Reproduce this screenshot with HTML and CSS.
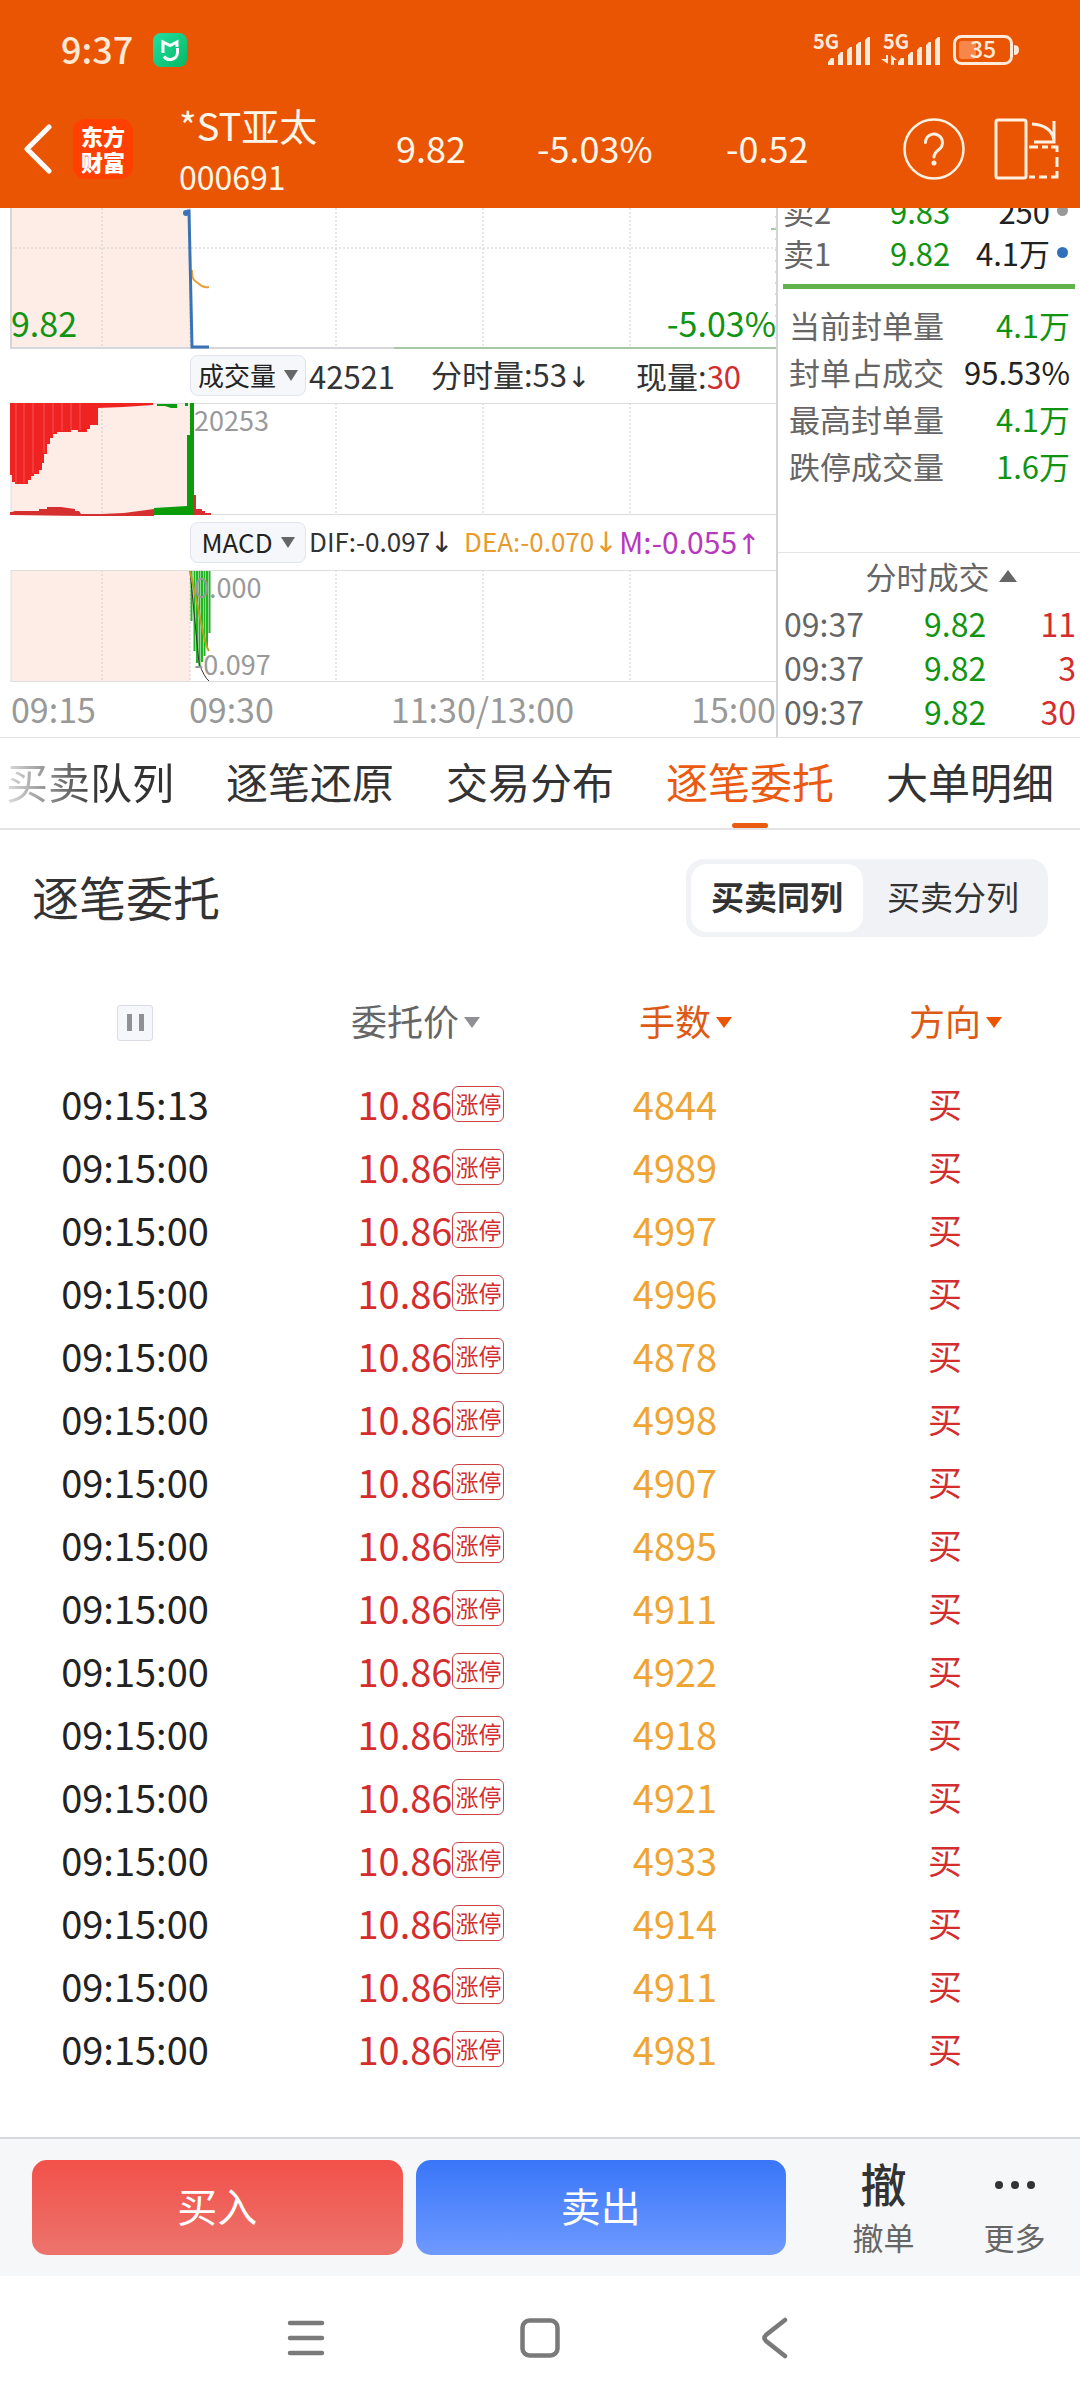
FILE: index.html
```html
<!DOCTYPE html>
<html lang="zh-CN">
<head>
<meta charset="utf-8">
<meta name="viewport" content="width=device-width">
<title>*ST亚太 000691</title>
<link rel="stylesheet" href="styles.css">
</head>
<body>
<header class="top">
  <div class="status">
    <span class="clock">9:37</span>
    <svg class="mi" viewBox="0 0 34 34"><defs><linearGradient id="mg" x1="0" y1="0" x2="1" y2="1"><stop offset="0" stop-color="#1fe0a2"/><stop offset="1" stop-color="#08b763"/></linearGradient></defs><rect width="34" height="34" rx="8" fill="url(#mg)"/><path d="M10 20V9l7 3.500 7-3.500v5" fill="none" stroke="#fff" stroke-width="3"/><path d="M24.500 15v4.500a7.500 7.500 0 0 1-13.500 4" fill="none" stroke="#fff" stroke-width="3"/></svg>
    <span class="status-right">
      <svg class="signal" viewBox="0 0 58 32"><text x="0" y="15" class="g5">5G</text><g fill="#ffeada"><path d="M15 31v-3l3-4h3v7zM25 31V21l3-3h2v13zM34 31V16l3-3h2v18zM43 31V11l3-3h2v23zM52 31V6l3-3h2v28z"/></g></svg>
      <svg class="signal second" viewBox="0 0 58 32"><text x="1" y="15" class="g5">5G</text><g fill="#ffeada"><path d="M4 21h2v9l-7-5h5zM9 31V21l6 5h-3v5zM16 31v-3l3-4h3v7zM26 31V21l3-3h2v13zM35 31V16l3-3h2v18zM44 31V11l3-3h2v23zM53 31V6l3-3h2v28z"/></g></svg>
      <svg class="battery" viewBox="0 0 66 30"><rect x="1.500" y="1.500" width="57" height="27" rx="7" fill="none" stroke="#ffeada" stroke-width="3"/><rect x="6" y="6" width="17" height="18" rx="3" fill="#f6864a"/><path d="M61 10q5 0 5 5t-5 5z" fill="#ffeada"/><text x="30" y="23" text-anchor="middle" class="pct">35</text></svg>
    </span>
  </div>
  <div class="quote">
    <button class="icon-btn back" aria-label="返回"><svg width="30" height="50" viewBox="0 0 30 50"><path d="M26 3L4 25l22 22" fill="none" stroke="#fff" stroke-width="5" stroke-linecap="round" stroke-linejoin="round"/></svg></button>
    <div class="logo"><span>东方</span><span>财富</span></div>
    <h1 class="name">*ST亚太<span class="code">000691</span></h1>
    <span class="q">9.82</span>
    <span class="q">-5.03%</span>
    <span class="q">-0.52</span>
    <button class="icon-btn help" aria-label="帮助"><svg width="62" height="62" viewBox="0 0 62 62" fill="none" stroke="#fff1e2"><circle cx="31" cy="31" r="29.500" stroke-width="2.500"/><path d="M22.500 24.500a8.500 8.500 0 1 1 13.500 7c-3.500 2.500-5 4-5 7.500" stroke-width="3" stroke-linecap="round"/><circle cx="31" cy="45" r="1.500" stroke-width="2" fill="#fff1e2"/></svg></button>
    <button class="icon-btn rotate" aria-label="横屏"><svg width="66" height="62" viewBox="0 0 66 62" fill="none" stroke="#fff1e2" stroke-width="3"><rect x="2" y="2" width="30" height="58" rx="2"/><path d="M38 6q19 1 22 16M60 3v21H40"/><path d="M35 29h9M48 29h6M57 29h6v5M63 39v10M63 53v6h-6M53 59h-8M41 59h-6"/></svg></button>
  </div>
</header>

<main>
<section class="market">
  <div class="charts">
    <div class="panel price-panel">
      <svg viewBox="0 0 776 141" preserveAspectRatio="none">
        <rect x="11" width="179" height="139" fill="#fdede6"/>
        <g class="grid"><path d="M102 0v140M190 0v140M336 0v140M483 0v140M630 0v140M11 40h765"/></g>
        <path d="M11 0v140H776" fill="none" stroke="#d5d7da" stroke-width="2"/>
        <path d="M394 140H776" stroke="#a6c8a6" stroke-width="2"/><path d="M771 21h5" stroke="#9ecf9e" stroke-width="2"/><path d="M775.500 8v130" stroke="#cde3cd" stroke-dasharray="2 9"/>
        <path d="M192 62q0 8 2 10l5 4q4 4 10 3" fill="none" stroke="#e9a23b" stroke-width="2"/>
        <circle cx="186" cy="5" r="3" fill="#3a73b5"/><path d="M187 3h2l3 136h17" fill="none" stroke="#3a73b5" stroke-width="3"/>
      </svg>
      <span class="tag tag-low">9.82</span><span class="tag tag-pct">-5.03%</span>
    </div>
    <div class="indicator">
      <button class="picker">成交量<i class="tri"></i></button>
      <span class="vol">42521</span><span class="ticks">分时量:53<b class="arr">↓</b></span><span>现量:<em>30</em></span>
    </div>
    <div class="panel">
      <svg viewBox="0 0 776 113" preserveAspectRatio="none">
        <rect x="11" width="179" height="112" fill="#fdede6"/>
        <g class="grid"><path d="M102 0v112M190 0v112M336 0v112M483 0v112M630 0v112"/></g>
        <path d="M11 0.500H776M11 0v112M11 111.500H776" fill="none" stroke="#dcdee0"/>
        <path d="M10 0V72h2v7h3v2h13v-4h3v-4h3v-2h5v-4h3v-7h2v-9h3v-10h3v-6h3v-4h4v-2h14v-2h7v2h9v-3h3v-4h8V5l25-1 30-2V0z" fill="#f02323"/>
        <path d="M16 0v80M24 0v80M33 0v70M44 0v50M53 0v30M62 0v28M71 0v27M80 0v27" stroke="#f75555" fill="none"/>
        <path d="M10 112v-3h2l3-1h24v-2h8v-2h14l14 2v2h4l2 3h20l23-1 30-4v8z" fill="#d62f2f"/>
        <path d="M154 112v-7l33-2V32h3V0h4v112zM157 1h20v4h-6l-6-2h-8zM185 0h3v3h-3z" fill="#0a9c0a"/>
        <path d="M194 112V92h2v14h6v2h3v2h6v2z" fill="#d62f2f"/>
      </svg>
      <span class="tag small tag-top">20253</span>
    </div>
    <div class="indicator">
      <button class="picker">MACD<i class="tri"></i></button>
      <span class="dif">DIF:-0.097<b class="arr">↓</b></span><span class="dea">DEA:-0.070<b class="arr">↓</b></span><span class="m">M:-0.055<b class="arr">↑</b></span>
    </div>
    <div class="panel">
      <svg viewBox="0 0 776 113" preserveAspectRatio="none">
        <rect x="11" width="179" height="112" fill="#fdede6"/>
        <g class="grid"><path d="M102 0v112M190 0v112M336 0v112M483 0v112M630 0v112"/></g>
        <path d="M11 0.500H776M11 0v112M11 111.500H776" fill="none" stroke="#dcdee0"/>
        <path d="M191.500 1v50M194.500 1v80M197 1v92M199.500 1v96M202 1v91M204.500 1v85M207 1v75M209.500 1v62" stroke="#22b422" stroke-width="2" fill="none"/>
        <path d="M190 1l9 92q5 14 10 18" fill="none" stroke="#333"/><path d="M190 1q8 36 12 56t7 24" fill="none" stroke="#b8a21c" stroke-width="2"/>
      </svg>
      <span class="tag small tag-top">0.000</span><span class="tag small tag-bot">-0.097</span>
    </div>
    <div class="times"><span>09:15</span><span>09:30</span><span>11:30/13:00</span><span>15:00</span></div>
  </div>
  <aside class="side">
    <div class="book">
      <div><span>卖2</span><span class="green">9.83</span><span class="qty">250</span><i class="dot gray"></i></div>
      <div><span>卖1</span><span class="green">9.82</span><span class="qty">4.1万</span><i class="dot"></i></div>
    </div>
    <dl class="stats">
      <div><dt>当前封单量</dt><dd>4.1万</dd></div>
      <div><dt>封单占成交</dt><dd class="dark">95.53%</dd></div>
      <div><dt>最高封单量</dt><dd>4.1万</dd></div>
      <div><dt>跌停成交量</dt><dd>1.6万</dd></div>
    </dl>
    <button class="deal-head">分时成交<i class="tri up"></i></button>
    <div class="deals">
      <div><span>09:37</span><span class="green">9.82</span><span class="red">11</span></div>
      <div><span>09:37</span><span class="green">9.82</span><span class="red">3</span></div>
      <div><span>09:37</span><span class="green">9.82</span><span class="red">30</span></div>
    </div>
  </aside>
</section>

<nav class="tabs">
  <a href="#" class="fade">买卖队列</a><a href="#">逐笔还原</a><a href="#">交易分布</a><a href="#" class="on">逐笔委托</a><a href="#">大单明细</a>
</nav>

<section class="orders">
  <div class="orders-head">
    <h2>逐笔委托</h2>
    <div class="segment"><button class="on">买卖同列</button><button>买卖分列</button></div>
  </div>
  <table>
    <thead><tr>
      <th><button class="pause" aria-label="暂停"><svg width="17" height="17" viewBox="0 0 17 17"><path d="M0 0h5v17H0zM12 0h5v17h-5z" fill="#909096"/></svg></button></th>
      <th><button class="sort"><span>委托价</span><i class="tri"></i></button></th>
      <th><button class="sort active"><span>手数</span><i class="tri"></i></button></th>
      <th><button class="sort active"><span>方向</span><i class="tri"></i></button></th>
    </tr></thead>
    <tbody>
      <tr><td>09:15:13</td><td><div class="price"><span>10.86</span><small>涨停</small></div></td><td>4844</td><td>买</td></tr>
      <tr><td>09:15:00</td><td><div class="price"><span>10.86</span><small>涨停</small></div></td><td>4989</td><td>买</td></tr>
      <tr><td>09:15:00</td><td><div class="price"><span>10.86</span><small>涨停</small></div></td><td>4997</td><td>买</td></tr>
      <tr><td>09:15:00</td><td><div class="price"><span>10.86</span><small>涨停</small></div></td><td>4996</td><td>买</td></tr>
      <tr><td>09:15:00</td><td><div class="price"><span>10.86</span><small>涨停</small></div></td><td>4878</td><td>买</td></tr>
      <tr><td>09:15:00</td><td><div class="price"><span>10.86</span><small>涨停</small></div></td><td>4998</td><td>买</td></tr>
      <tr><td>09:15:00</td><td><div class="price"><span>10.86</span><small>涨停</small></div></td><td>4907</td><td>买</td></tr>
      <tr><td>09:15:00</td><td><div class="price"><span>10.86</span><small>涨停</small></div></td><td>4895</td><td>买</td></tr>
      <tr><td>09:15:00</td><td><div class="price"><span>10.86</span><small>涨停</small></div></td><td>4911</td><td>买</td></tr>
      <tr><td>09:15:00</td><td><div class="price"><span>10.86</span><small>涨停</small></div></td><td>4922</td><td>买</td></tr>
      <tr><td>09:15:00</td><td><div class="price"><span>10.86</span><small>涨停</small></div></td><td>4918</td><td>买</td></tr>
      <tr><td>09:15:00</td><td><div class="price"><span>10.86</span><small>涨停</small></div></td><td>4921</td><td>买</td></tr>
      <tr><td>09:15:00</td><td><div class="price"><span>10.86</span><small>涨停</small></div></td><td>4933</td><td>买</td></tr>
      <tr><td>09:15:00</td><td><div class="price"><span>10.86</span><small>涨停</small></div></td><td>4914</td><td>买</td></tr>
      <tr><td>09:15:00</td><td><div class="price"><span>10.86</span><small>涨停</small></div></td><td>4911</td><td>买</td></tr>
      <tr><td>09:15:00</td><td><div class="price"><span>10.86</span><small>涨停</small></div></td><td>4981</td><td>买</td></tr>
    </tbody>
  </table>
</section>
</main>

<footer>
  <div class="trade">
    <button class="buy">买入</button><button class="sell">卖出</button>
    <button class="tool"><b>撤</b><span>撤单</span></button>
    <button class="tool"><svg width="44" height="52" viewBox="0 0 44 52" fill="#333"><circle cx="6" cy="26" r="4"/><circle cx="22" cy="26" r="4"/><circle cx="38" cy="26" r="4"/></svg><span>更多</span></button>
  </div>
  <div class="sysnav">
    <button class="icon-btn" aria-label="最近任务"><svg width="40" height="44" viewBox="0 0 40 44" stroke="#7a7a7a" stroke-width="4.500" stroke-linecap="round"><path d="M4 7h32M4 22h32M4 37h32"/></svg></button>
    <button class="icon-btn" aria-label="主屏幕"><svg width="40" height="44" viewBox="0 0 40 44"><rect x="2.500" y="4.500" width="35" height="35" rx="7" fill="none" stroke="#7a7a7a" stroke-width="4.500"/></svg></button>
    <button class="icon-btn" aria-label="返回"><svg width="40" height="44" viewBox="0 0 40 44"><path d="M31 4L12 19q-3 3 0 6l19 15" fill="none" stroke="#7a7a7a" stroke-width="4.500" stroke-linecap="round"/></svg></button>
  </div>
</footer>
</body>
</html>
```
FILE: styles.css
```css
* { box-sizing: border-box; }
body {
  margin: 0;
  min-height: 100vh;
  display: flex;
  flex-direction: column;
  overflow-x: hidden;
  background: #fff;
  color: #333;
  font-family: "Noto Sans CJK SC", sans-serif;
  font-size: 31px;
  line-height: 1;
}
button { border: 0; padding: 0; margin: 0; background: none; color: inherit; font: inherit; }
a { color: inherit; text-decoration: none; }
h1, h2, dl, dd { margin: 0; font-weight: 400; }
main { flex: 1; }
svg { display: block; }
em { font-style: normal; color: #d42d2d; }
.green { color: #119411; }
.red { color: #d42d2d; }
.icon-btn { display: flex; }
.tri {
  display: inline-block;
  border: 7px solid transparent;
  border-top: 11px solid #666;
  border-bottom: 0;
}
.tri.up { border-width: 0 9px 12px; border-style: solid; border-color: transparent transparent #666; }

/* Status bar and quote header */
.top { background: #ea5504; color: #fff6ea; }
.status { display: flex; align-items: center; height: 90px; padding: 10px 61px 0 61px; }
.clock { padding-bottom: 4px; font-size: 36px; font-weight: 500; color: #ffe9d6; }
.mi { width: 34px; height: 34px; margin-left: 20px; }
.status-right { display: flex; margin-left: auto; }
.signal { width: 58px; height: 32px; overflow: visible; }
.signal.second { margin-left: 11px; }
.battery { width: 66px; height: 30px; margin-left: 13px; margin-top: 1px; overflow: visible; }
.g5 { font-size: 20px; font-weight: 700; fill: #ffeada; }
.pct { font-size: 23px; font-weight: 500; fill: #ffeada; }
.quote {
  display: grid;
  grid-template-columns: 50px 106px 217px 141px 189px 177px 91px 1fr;
  align-items: center;
  height: 118px;
  padding-left: 23px;
  font-size: 36px;
}
.q { padding-bottom: 4px; }
.logo {
  display: flex;
  flex-direction: column;
  align-items: center;
  justify-content: center;
  gap: 4px;
  width: 60px;
  height: 60px;
  padding-bottom: 3px;
  border-radius: 12px;
  background: #ff4000;
  color: #fff;
  font-size: 22px;
  font-weight: 900;
}
.name { display: flex; flex-direction: column; gap: 16px; font-size: 38px; white-space: nowrap; }
.code { font-size: 32px; }

/* Charts */
.market { display: grid; grid-template-columns: minmax(0, 1fr) 302px; border-bottom: 1px solid #dfe1e3; }
.charts { border-right: 2px solid #d3d5d8; }
.panel { position: relative; }
.panel svg { width: 100%; height: 113px; }
.price-panel svg { height: 141px; }
.grid { fill: none; stroke: #d2cecc; stroke-dasharray: 2 2; }
.tag { position: absolute; font-size: 34px; color: #119411; }
.tag-low { left: 11px; bottom: 9px; }
.tag-pct { right: 0; bottom: 9px; }
.tag.small { font-size: 27px; color: #999; }
.tag-top { left: 194px; top: 3px; }
.tag-bot { left: 194px; bottom: 6px; }
.indicator { display: flex; align-items: center; height: 54px; padding: 0 0 2px 190px; white-space: nowrap; }
.picker {
  display: flex;
  align-items: center;
  justify-content: center;
  gap: 8px;
  width: 116px;
  height: 41px;
  margin-right: 3px;
  border: 1px solid #e1e4ea;
  border-radius: 8px;
  background: #f6f7fa;
  font-size: 26px;
  color: #222;
}
.vol { width: 122px; }
.ticks { width: 205px; }
.arr { font-family: "DejaVu Sans", sans-serif; font-weight: 400; font-size: 28px; }
.dif, .dea { width: 155px; font-size: 26px; }
.dea { color: #e69b2c; }
.m { font-size: 30px; color: #b838bd; }
.times { display: flex; justify-content: space-between; align-items: center; height: 54px; padding: 0 0 2px 11px; font-size: 34px; color: #999; }
.times span:nth-child(2) { margin-left: -24px; }

/* Order book and deals */
.side { color: #666; white-space: nowrap; }
.book { display: flex; flex-direction: column; justify-content: flex-end; height: 81px; margin: 0 5px; padding-bottom: 11px; border-bottom: 5px solid #62b24e; overflow: hidden; }
.book div { display: grid; grid-template-columns: 107px 60px 100px 1fr; align-items: center; height: 42px; flex: none; }
.book .qty { text-align: right; color: #222; }
.dot { justify-self: center; width: 11px; height: 11px; border-radius: 50%; background: #2f70bd; }
.dot.gray { background: #999; }
.stats { height: 264px; padding: 12px 10px 0 11px; border-bottom: 1px solid #e2e4e6; }
.stats div { display: flex; justify-content: space-between; align-items: center; height: 47px; }
.stats dd { color: #119411; }
.stats .dark { color: #222; }
.deal-head { display: flex; align-items: center; justify-content: center; gap: 9px; width: 100%; height: 49px; padding: 0 0 4px 24px; }
.deals { font-size: 32px; }
.deals div { display: grid; grid-template-columns: 140px 1fr auto; align-items: center; height: 44px; padding: 0 4px 3px 6px; }

/* Tabs */
.tabs { display: flex; gap: 52px; height: 92px; padding-left: 6px; border-bottom: 2px solid #e3e4e6; font-size: 42px; white-space: nowrap; overflow: hidden; }
.tabs a { display: flex; flex-direction: column; justify-content: center; padding-bottom: 4px; }
.tabs .fade { background: linear-gradient(90deg, #ddd, #333 55%); background-clip: text; color: transparent; }
.tabs .on { position: relative; color: #ea5a10; }
.tabs .on::after { content: ""; position: absolute; left: calc(50% - 18px); bottom: 0; width: 36px; height: 5px; border-radius: 3px; background: #ea5a10; }

/* Orders */
.orders-head { display: flex; justify-content: space-between; align-items: center; padding: 29px 32px 33px; }
.orders-head h2 { padding-bottom: 5px; font-size: 47px; }
.segment { display: flex; padding: 5px; border-radius: 18px; background: #f1f2f5; font-size: 33px; }
.segment button { width: 180px; height: 68px; padding-bottom: 3px; border-radius: 16px; }
.segment .on { width: 172px; background: #fff; font-weight: 700; }
table { width: 100%; border-collapse: collapse; table-layout: fixed; margin-bottom: 54px; }
th { height: 105px; padding: 0; font-weight: 400; font-size: 36px; color: #666; }
td { height: 63px; padding: 0 0 5px; text-align: center; font-size: 38px; color: #222; }
td:nth-child(2) { color: #d42d2d; }
td:nth-child(3) { color: #efa534; }
td:nth-child(4) { color: #d42d2d; font-size: 34px; }
.pause { display: flex; align-items: center; justify-content: center; width: 36px; height: 36px; margin: 0 auto; border: 1px solid #d9dce2; border-radius: 3px; background: #f6f7fa; }
.sort, .price { display: grid; grid-template-columns: 1fr auto 1fr; align-items: center; width: 100%; }
.sort::before, .price::before { content: ""; }
.sort span { padding-bottom: 6px; }
.sort .tri { justify-self: start; margin-left: 5px; border-width: 11px 8px 0; border-top-color: #8f8f94; }
.sort.active { color: #dd5a14; }
.sort.active .tri { border-top-color: #ea5504; }
.price small { justify-self: start; width: 52px; height: 36px; border: 1px solid #c44; border-radius: 6px; font-size: 23px; line-height: 33px; }

/* Bottom bars */
.trade { display: flex; align-items: center; height: 139px; padding-left: 32px; border-top: 2px solid #d5d8dc; background: #f6f7f9; }
.buy, .sell { flex: 1; height: 95px; padding-bottom: 6px; border-radius: 15px; color: #fff; font-size: 40px; }
.buy { background: linear-gradient(#f25149, #ec746d); }
.sell { margin: 0 32px 0 13px; background: linear-gradient(#3976f8, #6f9aff); }
.tool { display: flex; flex-direction: column; align-items: center; width: 131px; padding-bottom: 4px; color: #666; }
.tool b { font-size: 46px; height: 52px; font-weight: 500; color: #333; }
.tool span { margin-top: 10px; }
.sysnav { display: flex; justify-content: center; align-items: center; gap: 194px; height: 124px; }
```
